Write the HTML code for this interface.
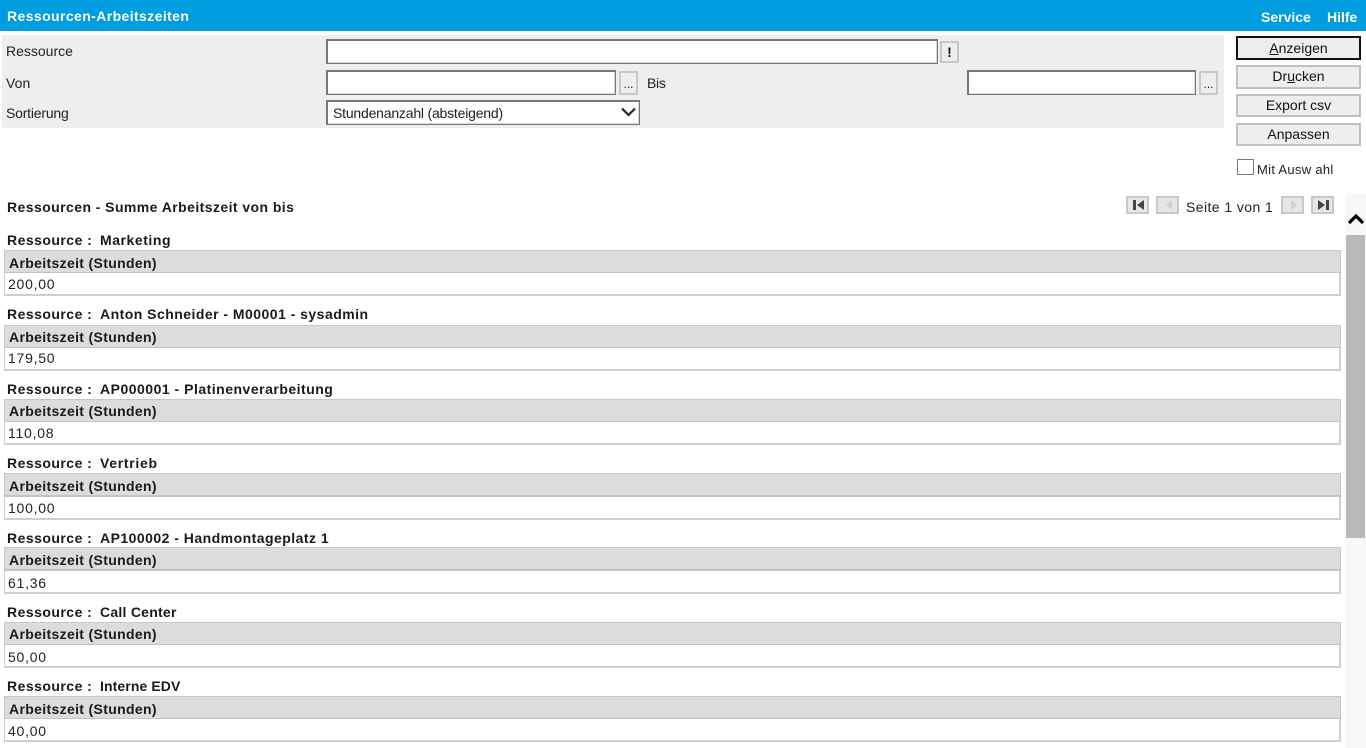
<!DOCTYPE html>
<html lang="de"><head><meta charset="utf-8"><title>Ressourcen-Arbeitszeiten</title>
<style>
html,body{margin:0;padding:0;width:1366px;height:748px;overflow:hidden;background:#fff;font:14px "Liberation Sans",Arial,sans-serif;color:#222}
div,span{position:absolute;box-sizing:border-box;white-space:pre}
.t{line-height:16px;height:16px}
.b{font-weight:bold;color:#1a1a1a;letter-spacing:.47px}
.a{letter-spacing:.34px}
.v{letter-spacing:.75px}
.in{background:#fff;border:1px solid #777;box-shadow:inset 1px 1px 0 #777,inset -1px -1px 0 #d8d8d8}
.sb{background:#eee;border:2px solid #c8c8c8;text-align:center;line-height:16px}
.btn{left:1236px;width:125px;background:#eee;border:2px solid #c0c0c0;text-align:center;font-size:14px;color:#111;line-height:19px}
.h{left:4px;width:1337px;height:24px;background:#dcdcdc;border:1px solid #c8c8c8;border-bottom:2px solid #c4c4c4}
.d{left:4px;width:1337px;height:23px;background:#fff;border:1px solid #d0d0d0;border-top:0;border-right-width:2px;border-bottom-width:2px}
.pg{width:23px;height:18px;top:196px;background:#e6e6e6;border:2px solid #c8c8c8}
u{text-decoration:underline}
</style></head><body>
<div style="left:0;top:0;width:1366px;height:31px;background:#009ee0"></div>
<div class="t" style="left:7px;top:8px;color:#fff;font-weight:bold;font-size:14px;letter-spacing:.4px">Ressourcen-Arbeitszeiten</div>
<div class="t" style="left:1261px;top:9px;color:#fff;font-weight:bold;font-size:14px">Service</div>
<div class="t" style="left:1327px;top:9px;color:#fff;font-weight:bold;font-size:14px">Hilfe</div>

<div style="left:2px;top:35px;width:1222px;height:93px;background:#eee"></div>
<div class="t" style="left:6px;top:43px">Ressource</div>
<div class="t" style="left:6px;top:75px;letter-spacing:.1px">Von</div>
<div class="t" style="left:6px;top:105px;letter-spacing:-.2px">Sortierung</div>
<div class="t" style="left:647px;top:75px;letter-spacing:-.3px">Bis</div>
<div class="in" style="left:326px;top:39px;width:612px;height:25px"></div>
<div class="sb" style="left:940px;top:41px;width:19px;height:22px;font-weight:bold;color:#111;line-height:18px">!</div>
<div class="in" style="left:326px;top:70px;width:290px;height:25px"></div>
<div class="sb" style="left:619px;top:71px;width:19px;height:24px;font-size:12px;line-height:22px">...</div>
<div class="in" style="left:967px;top:70px;width:229px;height:25px"></div>
<div class="sb" style="left:1199px;top:71px;width:19px;height:24px;font-size:12px;line-height:22px">...</div>
<div class="in" style="left:326px;top:100px;width:314px;height:25px"></div>
<div class="t" style="left:333px;top:105px;letter-spacing:-.2px">Stundenanzahl (absteigend)</div>
<svg style="position:absolute;left:620px;top:106px" width="17" height="12" viewBox="0 0 17 12"><path d="M2 2.500 L8.500 9 L15 2.500" fill="none" stroke="#222" stroke-width="2.200"/></svg>

<div class="btn" style="top:36px;height:24px;border-color:#111;line-height:21px"><u>A</u>nzeigen</div>
<div class="btn" style="top:65px;height:24px">Dr<u>u</u>cken</div>
<div class="btn" style="top:94px;height:23px">Export csv</div>
<div class="btn" style="top:123px;height:23px">Anpassen</div>
<div style="left:1237px;top:159px;width:17px;height:16px;background:#fff;border:1.500px solid #7a7a7a"></div>
<div class="t" style="left:1257px;top:162px;font-size:13px;letter-spacing:.3px">Mit Ausw ahl</div>

<div class="b t" style="left:7px;top:199px;letter-spacing:.43px">Ressourcen - Summe Arbeitszeit von bis</div>
<div class="t" style="left:1186px;top:199px;letter-spacing:.42px">Seite 1 von 1</div>
<div class="pg" style="left:1126px"><svg style="position:absolute;left:3px;top:1px" width="15" height="12"><path d="M2 1h3v10H2zM13 1v10L6 6z" fill="#444"/></svg></div>
<div class="pg" style="left:1156px"><svg style="position:absolute;left:3px;top:1px" width="15" height="12"><path d="M11 1v10L5 6z" fill="#d0d0d0"/></svg></div>
<div class="pg" style="left:1281px"><svg style="position:absolute;left:3px;top:1px" width="15" height="12"><path d="M5 1v10L11 6z" fill="#d0d0d0"/></svg></div>
<div class="pg" style="left:1311px"><svg style="position:absolute;left:3px;top:1px" width="15" height="12"><path d="M2 1v10L9 6zM10 1h3v10h-3z" fill="#444"/></svg></div>

<div style="left:1345px;top:193px;width:21px;height:555px;background:#f8f8f8"></div>
<div style="left:1346px;top:235px;width:19px;height:303px;background:#b9b9b9"></div>
<svg style="position:absolute;left:1348px;top:212px" width="16" height="13"><path d="M1 11 L8 4 L15 11" fill="none" stroke="#000" stroke-width="3.200"/></svg>

<div class="b t" style="left:7px;top:232px">Ressource :</div><div class="b t" style="left:100px;top:232px;letter-spacing:.55px">Marketing</div>
<div class="h" style="top:250px"></div><div class="b a t" style="left:9px;top:255px">Arbeitszeit (Stunden)</div>
<div class="d" style="top:273px"></div><div class="v t" style="left:8px;top:276px">200,00</div>

<div class="b t" style="left:7px;top:306px">Ressource :</div><div class="b t" style="left:100px;top:306px">Anton Schneider - M00001 - sysadmin</div>
<div class="h" style="top:325px"></div><div class="b a t" style="left:9px;top:329px">Arbeitszeit (Stunden)</div>
<div class="d" style="top:348px"></div><div class="v t" style="left:8px;top:350px">179,50</div>

<div class="b t" style="left:7px;top:381px">Ressource :</div><div class="b t" style="left:100px;top:381px;letter-spacing:.5px">AP000001 - Platinenverarbeitung</div>
<div class="h" style="top:399px"></div><div class="b a t" style="left:9px;top:403px">Arbeitszeit (Stunden)</div>
<div class="d" style="top:422px"></div><div class="v t" style="left:8px;top:425px">110,08</div>

<div class="b t" style="left:7px;top:455px">Ressource :</div><div class="b t" style="left:100px;top:455px;letter-spacing:.7px">Vertrieb</div>
<div class="h" style="top:473px"></div><div class="b a t" style="left:9px;top:478px">Arbeitszeit (Stunden)</div>
<div class="d" style="top:497px"></div><div class="v t" style="left:8px;top:500px">100,00</div>

<div class="b t" style="left:7px;top:530px">Ressource :</div><div class="b t" style="left:100px;top:530px">AP100002 - Handmontageplatz 1</div>
<div class="h" style="top:547px"></div><div class="b a t" style="left:9px;top:552px">Arbeitszeit (Stunden)</div>
<div class="d" style="top:571px"></div><div class="v t" style="left:8px;top:575px">61,36</div>

<div class="b t" style="left:7px;top:604px">Ressource :</div><div class="b t" style="left:100px;top:604px;letter-spacing:.25px">Call Center</div>
<div class="h" style="top:622px"></div><div class="b a t" style="left:9px;top:626px">Arbeitszeit (Stunden)</div>
<div class="d" style="top:645px"></div><div class="v t" style="left:8px;top:649px">50,00</div>

<div class="b t" style="left:7px;top:678px">Ressource :</div><div class="b t" style="left:100px;top:678px;letter-spacing:.1px">Interne EDV</div>
<div class="h" style="top:696px"></div><div class="b a t" style="left:9px;top:701px">Arbeitszeit (Stunden)</div>
<div class="d" style="top:719px"></div><div class="v t" style="left:8px;top:723px">40,00</div>
</body></html>
